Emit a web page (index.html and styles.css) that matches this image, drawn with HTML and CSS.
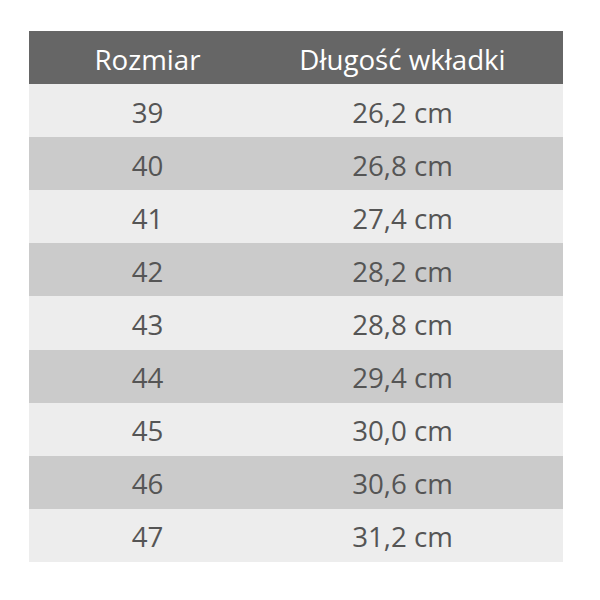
FILE: index.html
```html
<!DOCTYPE html>
<html lang="pl">
<head>
<meta charset="utf-8">
<link rel="stylesheet" href="styles.css">
</head>
<body>
<div class="table">
  <div class="row head"><div class="c1">Rozmiar</div><div class="c2">Długość wkładki</div></div>
  <div class="row light"><div class="c1">39</div><div class="c2">26,2 cm</div></div>
  <div class="row dark"><div class="c1">40</div><div class="c2">26,8 cm</div></div>
  <div class="row light"><div class="c1">41</div><div class="c2">27,4 cm</div></div>
  <div class="row dark"><div class="c1">42</div><div class="c2">28,2 cm</div></div>
  <div class="row light"><div class="c1">43</div><div class="c2">28,8 cm</div></div>
  <div class="row dark"><div class="c1">44</div><div class="c2">29,4 cm</div></div>
  <div class="row light"><div class="c1">45</div><div class="c2">30,0 cm</div></div>
  <div class="row dark"><div class="c1">46</div><div class="c2">30,6 cm</div></div>
  <div class="row light"><div class="c1">47</div><div class="c2">31,2 cm</div></div>
</div>
</body>
</html>
```
FILE: styles.css
```css
html, body {
  margin: 0;
  padding: 0;
  background: #fff;
}
body {
  padding: 31px 0 0 29px;
  font-family: "Open Sans", sans-serif;
}
.table {
  width: 534px;
  display: flex;
  flex-direction: column;
}
.row {
  display: grid;
  grid-template-columns: 237px 273px;
  height: 53.1px;
  box-sizing: border-box;
  padding: 2px 24px 0 0;
  align-items: center;
  font-size: 27.7px;
  color: #555;
  text-align: center;
}
.row > div {
  white-space: nowrap;
}
.head {
  background: #666;
  color: #fff;
}
.light {
  background: #ededed;
}
.dark {
  background: #cbcbcb;
}
```
